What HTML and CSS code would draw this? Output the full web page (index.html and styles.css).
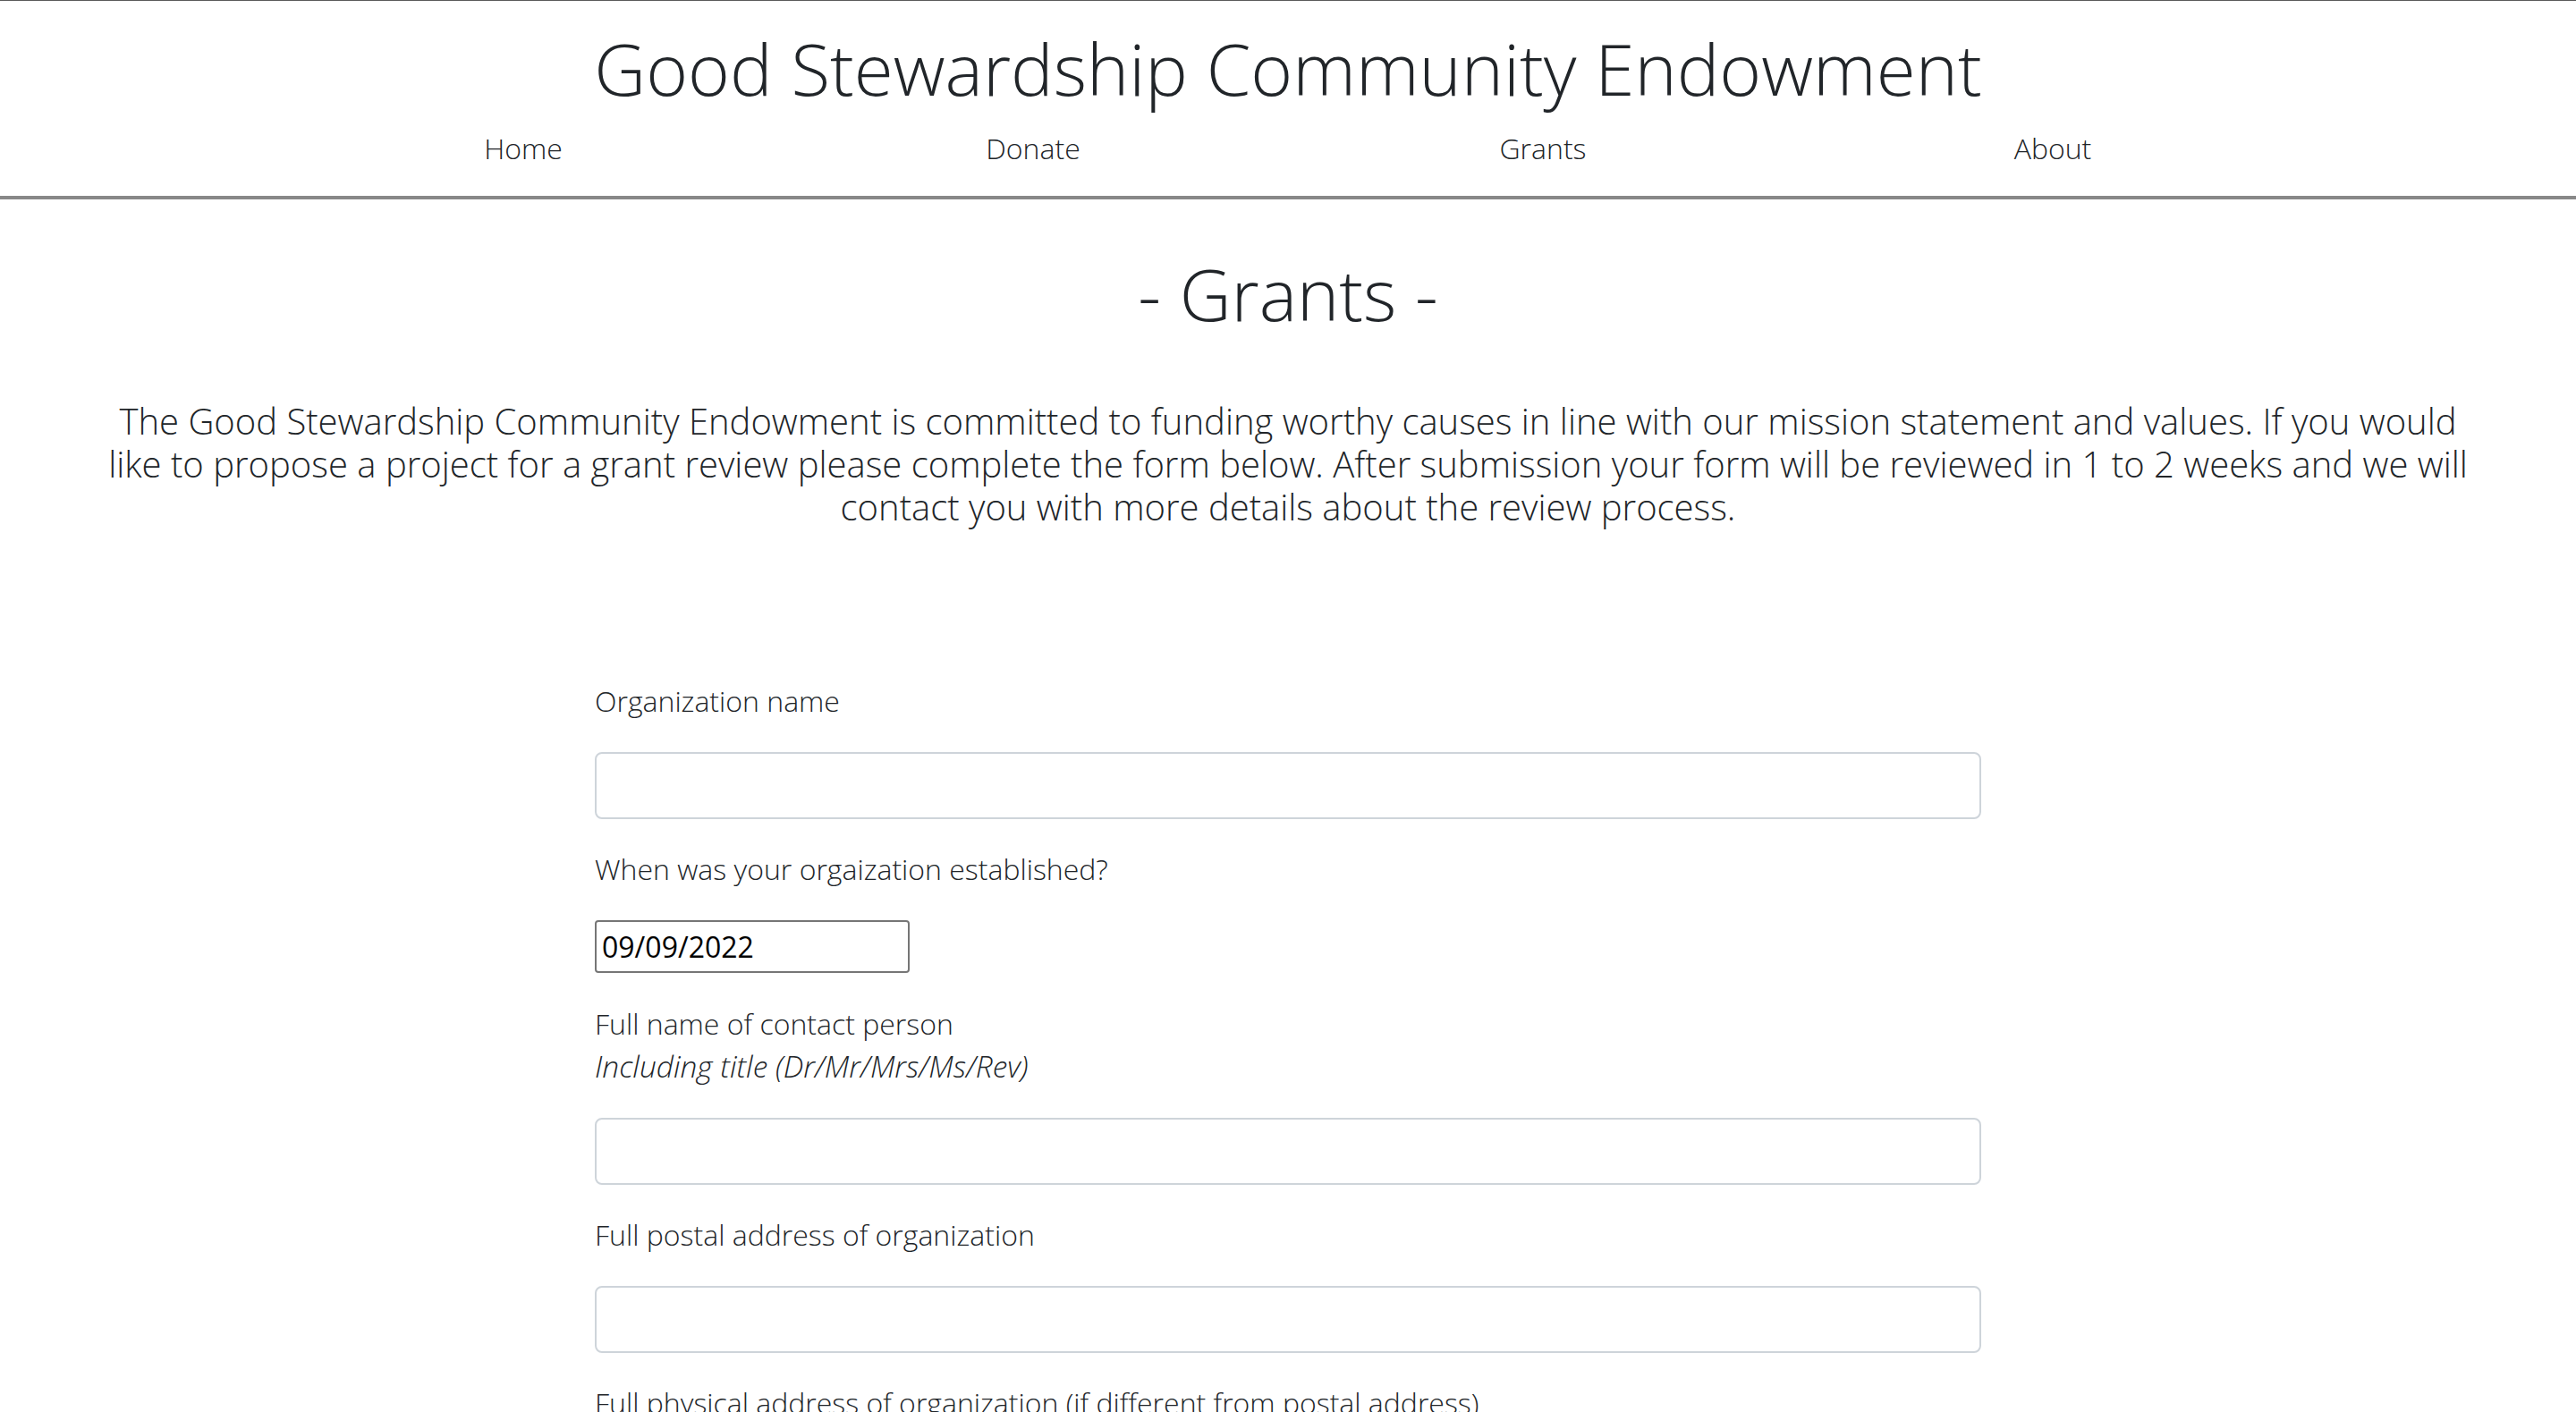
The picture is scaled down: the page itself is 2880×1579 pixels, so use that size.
FILE: index.html
```html
<!DOCTYPE html>
<html lang="en">
<head>
<meta charset="utf-8">
<title>Grants - Good Stewardship Community Endowment</title>
<link rel="stylesheet" href="styles.css">
</head>
<body>
<header class="site-header">
  <h1 class="site-title">Good Stewardship Community Endowment</h1>
  <nav class="site-nav">
    <a class="nav-link" href="#">Home</a>
    <a class="nav-link" href="#">Donate</a>
    <a class="nav-link" href="#">Grants</a>
    <a class="nav-link" href="#">About</a>
  </nav>
</header>
<main class="page">
  <h2 class="page-title">- Grants -</h2>
  <p class="intro">The Good Stewardship Community Endowment is committed to funding worthy causes in line with our mission statement and values. If you would like to propose a project for a grant review please complete the form below. After submission your form will be reviewed in 1 to 2 weeks and we will contact you with more details about the review process.</p>
  <form class="grant-form">
    <div class="field">
      <label class="field-label" for="org">Organization name</label>
      <input class="field-input" id="org" type="text">
    </div>
    <div class="field">
      <label class="field-label" for="est">When was your orgaization established?</label>
      <input class="date-input" id="est" type="text" value="09/09/2022">
    </div>
    <div class="field">
      <label class="field-label" for="contact">Full name of contact person<br><em class="hint">Including title (Dr/Mr/Mrs/Ms/Rev)</em></label>
      <input class="field-input" id="contact" type="text">
    </div>
    <div class="field">
      <label class="field-label" for="postal">Full postal address of organization</label>
      <input class="field-input" id="postal" type="text">
    </div>
    <div class="field">
      <label class="field-label" for="physical">Full physical address of organization (if different from postal address)</label>
      <input class="field-input" id="physical" type="text">
    </div>
  </form>
</main>
</body>
</html>
```
FILE: styles.css
```css
html, body {
  margin: 0;
  padding: 0;
  background: #ffffff;
}
body {
  font-family: "Open Sans", "Liberation Sans", sans-serif;
  font-weight: 300;
  color: #212529;
}
.site-header {
  border-top: 1px solid #5a5a5a;
  border-bottom: 4px solid #888888;
  padding: 27px 0 29px;
  text-align: center;
}
.site-title {
  margin: 0;
  font-size: 80px;
  line-height: 96px;
  font-weight: 300;
}
.site-nav {
  display: flex;
  width: 2280px;
  margin: 18px auto 0;
}
.nav-link {
  flex: 1;
  text-align: center;
  font-size: 32px;
  line-height: 48px;
  color: #212529;
  text-decoration: none;
}
.page {
  text-align: center;
}
.page-title {
  margin: 57px 0 0;
  font-size: 80px;
  line-height: 96px;
  font-weight: 300;
}
.intro {
  margin: 71px auto 0;
  padding: 0 112px;
  font-size: 40px;
  line-height: 48px;
}
.grant-form {
  width: 1550px;
  margin: 169px auto 0;
  text-align: left;
}
.field-label {
  display: block;
  font-size: 32px;
  line-height: 48px;
  margin-bottom: 33px;
}
.hint {
  font-style: italic;
  font-size: 33.5px;
  line-height: 40px;
}
.field-input {
  display: block;
  box-sizing: border-box;
  width: 100%;
  height: 75px;
  border: 2px solid #ced4da;
  border-radius: 8px;
  background: #ffffff;
  margin: 0 0 32px;
  padding: 0 24px;
  font-family: inherit;
  font-size: 32px;
}
.date-input {
  display: block;
  box-sizing: border-box;
  width: 352px;
  height: 59px;
  border: 2px solid #767676;
  border-radius: 4px;
  background: #ffffff;
  margin: 0 0 33px;
  padding: 0 6px;
  font-family: "Open Sans", sans-serif;
  font-weight: 400;
  font-size: 32px;
  color: #000000;
}
```
